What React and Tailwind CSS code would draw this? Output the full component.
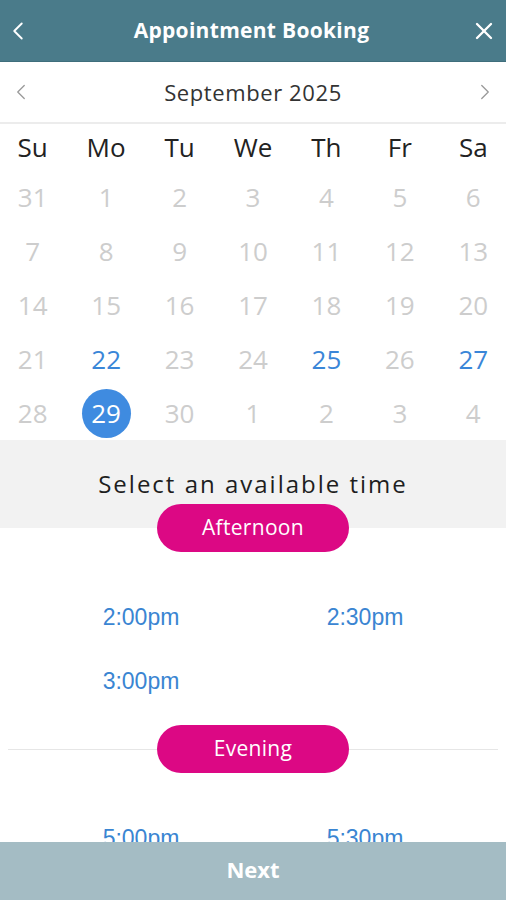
import { ChevronLeft, ChevronRight, X } from 'lucide-react'

const dayNames = ['Su', 'Mo', 'Tu', 'We', 'Th', 'Fr', 'Sa']

const weeks = [
  [31, 1, 2, 3, 4, 5, 6],
  [7, 8, 9, 10, 11, 12, 13],
  [14, 15, 16, 17, 18, 19, 20],
  [21, 22, 23, 24, 25, 26, 27],
  [28, 29, 30, 1, 2, 3, 4],
]
const available = [22, 25, 27]
const selected = 29

const sections = [
  { name: 'Afternoon', times: ['2:00pm', '2:30pm', '3:00pm'] },
  { name: 'Evening', times: ['5:00pm', '5:30pm'] },
]

function DayCell({ day, row }) {
  // first row high numbers and last row low numbers belong to other months
  const inMonth = !(row === 0 && day > 7) && !(row === 4 && day < 7)
  if (inMonth && day === selected) {
    return (
      <div className="flex items-center justify-center h-[54px]">
        <span className="w-[49px] h-[49px] rounded-full bg-[#3f8be0] text-white flex items-center justify-center">
          {day}
        </span>
      </div>
    )
  }
  const on = inMonth && available.includes(day)
  return (
    <div className={`flex items-center justify-center h-[54px] ${on ? 'text-[#3a86d8]' : 'text-[#cdcdcd]'}`}>
      {day}
    </div>
  )
}

function Pill({ label }) {
  return (
    <div className="w-[192px] h-[48px] rounded-full bg-[#dc0884] text-white text-[21px] tracking-[0.3px] flex items-center justify-center">
      {label}
    </div>
  )
}

export default function App() {
  return (
    <div className="h-[900px] w-full flex flex-col overflow-hidden bg-white font-['Open_Sans',sans-serif]">
      {/* Header */}
      <div className="h-[62px] shrink-0 bg-[#4a7b8a] flex items-center justify-between pl-[3px] pr-[6px] text-white border-b border-[#3f6e7c]">
        <ChevronLeft size={30} strokeWidth={1.5} />
        <h1 className="text-[21px] font-bold tracking-[0.3px]">Appointment Booking</h1>
        <X size={28} strokeWidth={2} className="mr-[2px]" />
      </div>

      <div className="flex-1 overflow-hidden flex flex-col">
        {/* Month selector */}
        <div className="h-[62px] shrink-0 flex items-center justify-between px-[8px] border-b-2 border-[#ececec] text-[#999]">
          <ChevronLeft size={26} strokeWidth={1.2} />
          <span className="text-[22px] text-[#333] tracking-[0.6px]">September 2025</span>
          <ChevronRight size={26} strokeWidth={1.2} />
        </div>

        {/* Calendar */}
        <div className="-mx-[4px] shrink-0">
          <div className="grid grid-cols-7 h-[46px] text-[26px] text-[#222]">
            {dayNames.map((d) => (
              <div key={d} className="flex items-center justify-center">{d}</div>
            ))}
          </div>
          {weeks.map((week, r) => (
            <div key={r} className="grid grid-cols-7 text-[26px]">
              {week.map((day, i) => (
                <DayCell key={i} day={day} row={r} />
              ))}
            </div>
          ))}
        </div>

        {/* Time band */}
        <div className="h-[88px] shrink-0 bg-[#f2f2f2] flex items-center justify-center">
          <span className="text-[24px] text-[#1e1e1e] tracking-[2px]">Select an available time</span>
        </div>

        {sections.map((s, idx) => (
          <div key={s.name} className="shrink-0">
            <div className={`flex items-center px-2 ${idx === 0 ? '-mt-[24px]' : ''}`}>
              <div className={`flex-1 h-px ${idx === 0 ? '' : 'bg-[#e6e6e6]'}`}></div>
              <Pill label={s.name} />
              <div className={`flex-1 h-px ${idx === 0 ? '' : 'bg-[#e6e6e6]'}`}></div>
            </div>
            <div className="grid grid-cols-2 px-[29px] pt-[33px] pb-[12px] font-['Liberation_Sans',Arial,sans-serif] text-[23px] text-[#3a85d2]">
              {s.times.map((t) => (
                <div key={t} className="h-[64px] flex items-center justify-center">{t}</div>
              ))}
            </div>
          </div>
        ))}
      </div>

      {/* Footer */}
      <button className="h-[58px] shrink-0 w-full bg-[#a4bcc4] text-white text-[22px] font-bold pb-1">
        Next
      </button>
    </div>
  )
}
